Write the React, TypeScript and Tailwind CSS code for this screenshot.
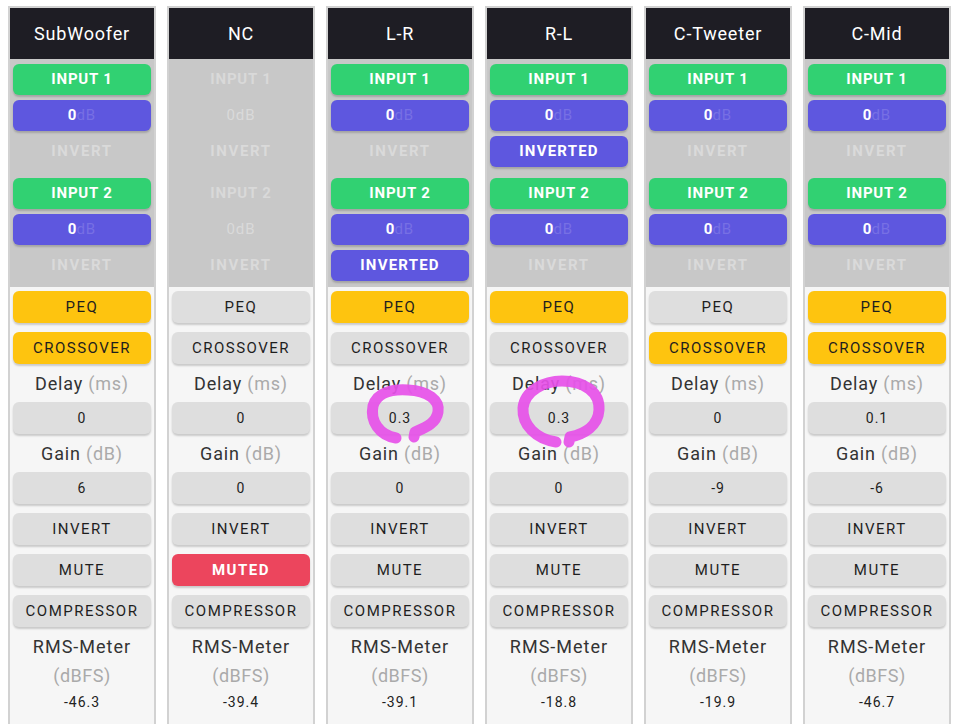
import React from "react";

type Channel = {
  name: string;
  enabled: boolean;
  inv1: boolean;
  inv2: boolean;
  peq: boolean;
  xover: boolean;
  delay: string;
  gain: string;
  muted: boolean;
  rms: string;
};

const channels: Channel[] = [
  { name: "SubWoofer", enabled: true, inv1: false, inv2: false, peq: true, xover: true, delay: "0", gain: "6", muted: false, rms: "-46.3" },
  { name: "NC", enabled: false, inv1: false, inv2: false, peq: false, xover: false, delay: "0", gain: "0", muted: true, rms: "-39.4" },
  { name: "L-R", enabled: true, inv1: false, inv2: true, peq: true, xover: false, delay: "0.3", gain: "0", muted: false, rms: "-39.1" },
  { name: "R-L", enabled: true, inv1: true, inv2: false, peq: true, xover: false, delay: "0.3", gain: "0", muted: false, rms: "-18.8" },
  { name: "C-Tweeter", enabled: true, inv1: false, inv2: false, peq: false, xover: true, delay: "0", gain: "-9", muted: false, rms: "-19.9" },
  { name: "C-Mid", enabled: true, inv1: false, inv2: false, peq: true, xover: true, delay: "0.1", gain: "-6", muted: false, rms: "-46.7" },
];

const shadow = "shadow-[0_2px_2px_rgba(0,0,0,0.18)]";

function InputGroup({ label, enabled, inverted }: { label: string; enabled: boolean; inverted: boolean }) {
  return (
    <div className="flex flex-col gap-[5px]">
      {enabled ? (
        <div className={`h-[31px] mx-[3px] rounded-md bg-[#31d172] ${shadow} flex items-center justify-center text-white font-bold text-[15px] tracking-[0.8px]`}>
          {label}
        </div>
      ) : (
        <div className="h-[31px] mx-[3px] flex items-center justify-center text-[#d9d9d9] font-bold text-[15px] tracking-[0.8px]">
          {label}
        </div>
      )}
      {enabled ? (
        <div className={`h-[31px] mx-[3px] rounded-md bg-[#5e57df] ${shadow} flex items-center justify-center text-[15px]`}>
          <span className="text-white font-bold">0</span>
          <span className="text-[#7770e4] tracking-[1px]">dB</span>
        </div>
      ) : (
        <div className="h-[31px] mx-[3px] flex items-center justify-center text-[15px] text-[#dadada] tracking-[1px]">
          0dB
        </div>
      )}
      {inverted ? (
        <div className={`h-[31px] mx-[3px] rounded-md bg-[#5e57df] ${shadow} flex items-center justify-center text-white font-bold text-[15px] tracking-[1.2px]`}>
          INVERTED
        </div>
      ) : (
        <div className="h-[31px] mx-[3px] flex items-center justify-center text-[#dadada] font-bold text-[15px] tracking-[1.6px]">
          INVERT
        </div>
      )}
    </div>
  );
}

function Btn({ children, tone, className = "" }: { children: React.ReactNode; tone: "gray" | "yellow" | "red"; className?: string }) {
  const toneCls =
    tone === "yellow"
      ? "bg-[#fec40f] text-[#1e1e1e]"
      : tone === "red"
      ? "bg-[#ec455d] text-white font-bold"
      : "bg-[#dedede] text-[#1e1e1e]";
  return (
    <div className={`h-8 rounded-md ${toneCls} ${shadow} flex items-center justify-center text-[15px] tracking-[1.5px] ${className}`}>
      {children}
    </div>
  );
}

function Label({ main, unit }: { main: string; unit: string }) {
  return (
    <div className="h-[38px] flex items-center justify-center text-[18px] tracking-[0.8px] text-[#333]">
      {main}&nbsp;<span className="text-[#aaa]">{unit}</span>
    </div>
  );
}

function ChannelStrip({ ch }: { ch: Channel }) {
  return (
    <div className="w-[148px] shrink-0 border-2 border-[#d2d2d2] flex flex-col">
      <div className="h-[51px] bg-[#1e1d24] flex items-center justify-center text-white text-[18px] tracking-[0.8px]">
        {ch.name}
      </div>
      <div className="bg-[#c8c8c8] pt-[5px] pb-[6px] flex flex-col gap-[11px]">
        <InputGroup label="INPUT 1" enabled={ch.enabled} inverted={ch.inv1} />
        <InputGroup label="INPUT 2" enabled={ch.enabled} inverted={ch.inv2} />
      </div>
      <div className="bg-[#f6f6f6] px-[3px] pt-[4px] pb-6 flex flex-col">
        <Btn tone={ch.peq ? "yellow" : "gray"}>PEQ</Btn>
        <Btn tone={ch.xover ? "yellow" : "gray"} className="mt-[9px]">CROSSOVER</Btn>
        <Label main="Delay" unit="(ms)" />
        <Btn tone="gray" className="!text-[14px] !tracking-[1px]">{ch.delay}</Btn>
        <Label main="Gain" unit="(dB)" />
        <Btn tone="gray" className="!text-[14px] !tracking-[1px]">{ch.gain}</Btn>
        <Btn tone="gray" className="mt-[9px]">INVERT</Btn>
        <Btn tone={ch.muted ? "red" : "gray"} className="mt-[9px]">{ch.muted ? "MUTED" : "MUTE"}</Btn>
        <Btn tone="gray" className="mt-[9px]">COMPRESSOR</Btn>
        <div className="mt-[10px] h-5 leading-5 text-center text-[18px] tracking-[1px] text-[#333]">RMS-Meter</div>
        <div className="mt-[9px] h-5 leading-5 text-center text-[18px] tracking-[0.5px] text-[#aaa]">(dBFS)</div>
        <div className="mt-[8px] h-4 leading-4 text-center text-sm tracking-[1px] text-[#222]">{ch.rms}</div>
      </div>
    </div>
  );
}

export default function App() {
  return (
    <div
      className="relative w-[960px] h-[724px] overflow-hidden bg-white"
      style={{ fontFamily: "Roboto, 'Noto Sans', sans-serif" }}
    >
      <div className="flex gap-[11px] pl-2 pt-[6px]">
        {channels.map((ch) => (
          <ChannelStrip key={ch.name} ch={ch} />
        ))}
      </div>

      {/* hand-drawn highlight marks */}
      <svg className="absolute inset-0 pointer-events-none" width="960" height="724" viewBox="0 0 960 724">
        <g fill="none" stroke="#e650e8" strokeOpacity="0.92" strokeWidth="11" strokeLinecap="round" strokeLinejoin="round">
          <path d="M396 438 C 379 435, 370 421, 373 406 C 377 392, 393 389, 408 390 C 428 391, 440 400, 438 412 C 436 424, 424 428, 415 432 L 414 437" />
          <path d="M556 442 C 536 439, 522 425, 523 408 C 525 390, 545 381, 562 381 C 584 381, 600 392, 599 410 C 598 426, 584 434, 570 437 L 569 442" />
        </g>
      </svg>
    </div>
  );
}
